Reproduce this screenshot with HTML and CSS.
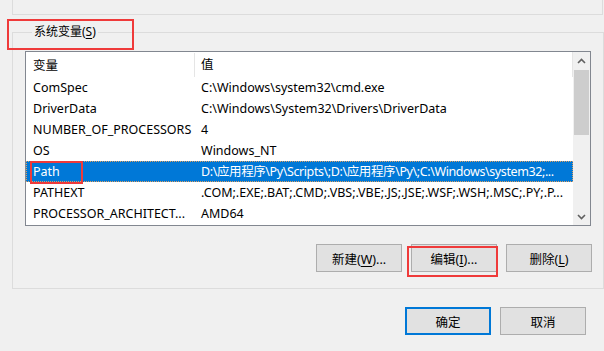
FILE: index.html
```html
<!doctype html>
<html>
<head>
  <meta charset="utf-8">
  <title>环境变量</title>
  <link rel="stylesheet" href="styles.css">
</head>
<body>
  <!-- bottom edge of the user variables group, scrolled above -->
  <div class="prev-group"></div>

  <fieldset class="group">
    <legend class="group-title">系统变量(<u>S</u>)</legend>

    <div class="list">
      <div class="list-body">
        <div class="row head">
          <div class="cell name">变量</div>
          <div class="cell value">值</div>
        </div>
        <div class="row">
          <div class="cell name">ComSpec</div>
          <div class="cell value">C:\Windows\system32\cmd.exe</div>
        </div>
        <div class="row">
          <div class="cell name">DriverData</div>
          <div class="cell value">C:\Windows\System32\Drivers\DriverData</div>
        </div>
        <div class="row">
          <div class="cell name">NUMBER_OF_PROCESSORS</div>
          <div class="cell value">4</div>
        </div>
        <div class="row">
          <div class="cell name">OS</div>
          <div class="cell value">Windows_NT</div>
        </div>
        <div class="row selected">
          <div class="cell name">Path</div>
          <div class="cell value tight">D:\应用程序\Py\Scripts\;D:\应用程序\Py\;C:\Windows\system32;...</div>
        </div>
        <div class="row">
          <div class="cell name">PATHEXT</div>
          <div class="cell value">.COM;.EXE;.BAT;.CMD;.VBS;.VBE;.JS;.JSE;.WSF;.WSH;.MSC;.PY;.P...</div>
        </div>
        <div class="row">
          <div class="cell name">PROCESSOR_ARCHITECT...</div>
          <div class="cell value">AMD64</div>
        </div>
      </div>
      <div class="scrollbar">
        <div class="arrow">
          <svg width="9" height="6" viewBox="0 0 9 6"><polyline points="1,5 4.5,1.5 8,5" fill="none" stroke="#606060" stroke-width="1.6"/></svg>
        </div>
        <div class="track"><div class="thumb"></div></div>
        <div class="arrow">
          <svg width="9" height="6" viewBox="0 0 9 6"><polyline points="1,1 4.5,4.5 8,1" fill="none" stroke="#606060" stroke-width="1.6"/></svg>
        </div>
      </div>
    </div>

    <div class="actions">
      <button class="btn">新建(<u>W</u>)...</button>
      <button class="btn">编辑(<u>I</u>)...</button>
      <button class="btn">删除(<u>L</u>)</button>
    </div>
  </fieldset>

  <div class="dialog-actions">
    <button class="btn default">确定</button>
    <button class="btn">取消</button>
  </div>

  <!-- red annotation boxes drawn over the screenshot -->
  <div class="mark mark-title"></div>
  <div class="mark mark-path"></div>
  <div class="mark mark-edit"></div>
</body>
</html>
```

FILE: styles.css
```css
body {
  margin: 0;
  width: 604px;
  height: 351px;
  overflow: hidden;
  position: relative;
  background: #f0f0f0;
  color: #000;
  font-family: "Noto Sans", "Noto Sans CJK SC", sans-serif;
  font-size: 12.5px;
}
u {
  text-decoration-thickness: 1px;
  text-underline-offset: 2px;
}

.prev-group {
  margin-left: 12px;
  width: 589px;
  height: 14px;
  border: 1px solid #dcdcdc;
  border-top: none;
}

.group {
  margin: 9px 0 0 12px;
  padding: 0 11px 16px 12px;
  width: 567px;
  border: 1px solid #dcdcdc;
}
.group-title {
  margin-left: 7px;
  padding: 0 2px;
  line-height: 16px;
  font-size: 12px;
}

.list {
  display: flex;
  margin-top: 11px;
  width: 564px;
  height: 173px;
  border: 1px solid #828790;
  background: #fff;
}
.list-body {
  flex: 1;
  overflow: hidden;
}
.row {
  display: grid;
  grid-template-columns: 169px 1fr;
  height: 21px;
  line-height: 21px;
  white-space: nowrap;
}
.row.head {
  height: 25px;
  line-height: 25px;
  border-right: 1px solid #e5e5e5;
}
.cell {
  overflow: hidden;
  text-overflow: ellipsis;
}
.cell.name {
  padding-left: 7px;
}
.cell.value {
  padding-left: 6px;
}
.cell.tight {
  letter-spacing: -0.4px;
}
.head .cell.name {
  border-right: 1px solid #e5e5e5;
  margin: 1px 0 0;
}
.row.selected {
  background: #0078d7;
  color: #fff;
  outline: 1px dotted #e0a060;
  outline-offset: -1px;
}

.scrollbar {
  display: flex;
  flex-direction: column;
  width: 17px;
  background: #f0f0f0;
}
.arrow {
  display: flex;
  align-items: center;
  justify-content: center;
  height: 17px;
}
.track {
  flex: 1;
}
.thumb {
  margin: 1px 1px 0;
  height: 65px;
  background: #cdcdcd;
}

.actions {
  display: flex;
  justify-content: flex-end;
  gap: 9px;
  margin-top: 18px;
}
.btn {
  width: 86px;
  height: 28px;
  padding: 0;
  border: 1px solid #adadad;
  background: #e1e1e1;
  color: #000;
  font: inherit;
}
.btn.default {
  border: 2px solid #0078d7;
}
.dialog-actions {
  display: flex;
  justify-content: flex-end;
  gap: 9px;
  margin-top: 18px;
  padding-right: 18px;
}

.mark {
  position: absolute;
  border: 2px solid #ef3a3a;
}
.mark-title {
  left: 7px;
  top: 19px;
  width: 123px;
  height: 27px;
}
.mark-path {
  left: 30px;
  top: 161px;
  width: 49px;
  height: 19px;
}
.mark-edit {
  left: 407px;
  top: 246px;
  width: 87px;
  height: 27px;
}
```
